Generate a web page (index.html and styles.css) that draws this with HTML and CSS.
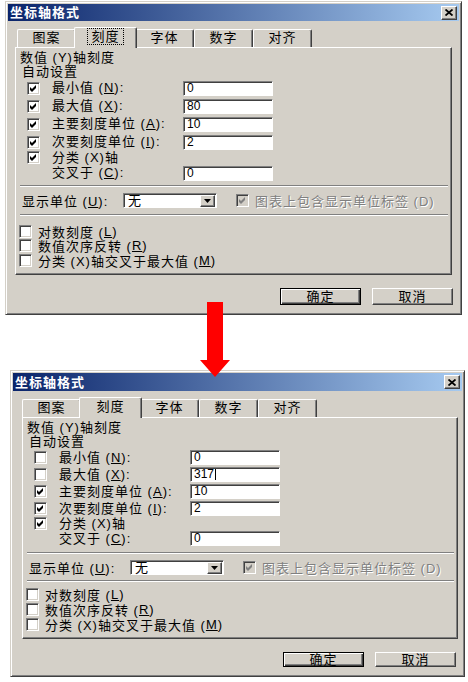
FILE: index.html
```html
<!DOCTYPE html>
<html lang="zh-CN">
<head>
  <meta charset="UTF-8">
  <title>坐标轴格式</title>
  <link rel="stylesheet" href="styles.css">
</head>
<body>
<div class="page">

  <!-- 修改前 -->
  <div class="dialog dialog-before">
    <div class="titlebar">
      <span class="title">坐标轴格式</span>
      <span class="close"><svg width="8" height="7" viewBox="0 0 8 7"><path d="M0.5 0.5L7.5 6.5M7.5 0.5L0.5 6.5" stroke="#000" stroke-width="1.8"/></svg></span>
    </div>
    <div class="tabs">
      <div class="tab">图案</div>
      <div class="tab active"><span class="focus">刻度</span></div>
      <div class="tab">字体</div>
      <div class="tab">数字</div>
      <div class="tab">对齐</div>
    </div>
    <div class="panel">
      <div class="caption">数值 (Y)轴刻度</div>
      <div class="caption sub">自动设置</div>
      <div class="scale">
        <div class="row">
          <span class="box"><svg class="tick" viewBox="0 0 7 7"><polygon points="0,2 2,4 6,0 6,3 2,7 0,5"/></svg></span>
          <span class="label">最小值 (<u>N</u>):</span>
          <span class="field">0</span>
        </div>
        <div class="row">
          <span class="box"><svg class="tick" viewBox="0 0 7 7"><polygon points="0,2 2,4 6,0 6,3 2,7 0,5"/></svg></span>
          <span class="label">最大值 (<u>X</u>):</span>
          <span class="field">80</span>
        </div>
        <div class="row">
          <span class="box"><svg class="tick" viewBox="0 0 7 7"><polygon points="0,2 2,4 6,0 6,3 2,7 0,5"/></svg></span>
          <span class="label">主要刻度单位 (<u>A</u>):</span>
          <span class="field">10</span>
        </div>
        <div class="row">
          <span class="box"><svg class="tick" viewBox="0 0 7 7"><polygon points="0,2 2,4 6,0 6,3 2,7 0,5"/></svg></span>
          <span class="label">次要刻度单位 (<u>I</u>):</span>
          <span class="field">2</span>
        </div>
        <div class="row short">
          <span class="box"><svg class="tick" viewBox="0 0 7 7"><polygon points="0,2 2,4 6,0 6,3 2,7 0,5"/></svg></span>
          <span class="label">分类 (X)轴</span>
        </div>
        <div class="row">
          <span class="box-space"></span>
          <span class="label">交叉于 (<u>C</u>):</span>
          <span class="field">0</span>
        </div>
      </div>
      <div class="etch etch-top"></div>
      <div class="unit-row">
        <span class="unit-label">显示单位 (<u>U</u>):</span>
        <span class="select">
          <span class="select-value">无</span>
          <span class="drop"><svg width="7" height="4" viewBox="0 0 7 4"><polygon points="0,0 7,0 3.5,4"/></svg></span>
        </span>
        <span class="box disabled"><svg class="tick" viewBox="0 0 7 7"><polygon points="0,2 2,4 6,0 6,3 2,7 0,5"/></svg></span>
        <span class="label-disabled">图表上包含显示单位标签 (D)</span>
      </div>
      <div class="etch etch-bottom"></div>
      <div class="options">
        <div class="option"><span class="box"></span>对数刻度 (<u>L</u>)</div>
        <div class="option"><span class="box"></span>数值次序反转 (<u>R</u>)</div>
        <div class="option"><span class="box"></span>分类 (X)轴交叉于最大值 (<u>M</u>)</div>
      </div>
    </div>
    <div class="actions">
      <div class="btn default">确定</div>
      <div class="btn">取消</div>
    </div>
  </div>

  <svg class="arrow" width="32" height="76" viewBox="0 0 32 76"><polygon points="8,0 24,0 24,58 31,58 16,75 1,58 8,58"/></svg>

  <!-- 修改后 -->
  <div class="dialog dialog-after">
    <div class="titlebar">
      <span class="title">坐标轴格式</span>
      <span class="close"><svg width="8" height="7" viewBox="0 0 8 7"><path d="M0.5 0.5L7.5 6.5M7.5 0.5L0.5 6.5" stroke="#000" stroke-width="1.8"/></svg></span>
    </div>
    <div class="tabs">
      <div class="tab">图案</div>
      <div class="tab active">刻度</div>
      <div class="tab">字体</div>
      <div class="tab">数字</div>
      <div class="tab">对齐</div>
    </div>
    <div class="panel">
      <div class="caption">数值 (Y)轴刻度</div>
      <div class="caption sub">自动设置</div>
      <div class="scale">
        <div class="row">
          <span class="box"></span>
          <span class="label">最小值 (<u>N</u>):</span>
          <span class="field">0</span>
        </div>
        <div class="row">
          <span class="box"></span>
          <span class="label">最大值 (<u>X</u>):</span>
          <span class="field">317<span class="caret"></span></span>
        </div>
        <div class="row">
          <span class="box"><svg class="tick" viewBox="0 0 7 7"><polygon points="0,2 2,4 6,0 6,3 2,7 0,5"/></svg></span>
          <span class="label">主要刻度单位 (<u>A</u>):</span>
          <span class="field">10</span>
        </div>
        <div class="row">
          <span class="box"><svg class="tick" viewBox="0 0 7 7"><polygon points="0,2 2,4 6,0 6,3 2,7 0,5"/></svg></span>
          <span class="label">次要刻度单位 (<u>I</u>):</span>
          <span class="field">2</span>
        </div>
        <div class="row short">
          <span class="box"><svg class="tick" viewBox="0 0 7 7"><polygon points="0,2 2,4 6,0 6,3 2,7 0,5"/></svg></span>
          <span class="label">分类 (X)轴</span>
        </div>
        <div class="row">
          <span class="box-space"></span>
          <span class="label">交叉于 (<u>C</u>):</span>
          <span class="field">0</span>
        </div>
      </div>
      <div class="etch etch-top"></div>
      <div class="unit-row">
        <span class="unit-label">显示单位 (<u>U</u>):</span>
        <span class="select">
          <span class="select-value">无</span>
          <span class="drop"><svg width="7" height="4" viewBox="0 0 7 4"><polygon points="0,0 7,0 3.5,4"/></svg></span>
        </span>
        <span class="box disabled"><svg class="tick" viewBox="0 0 7 7"><polygon points="0,2 2,4 6,0 6,3 2,7 0,5"/></svg></span>
        <span class="label-disabled">图表上包含显示单位标签 (D)</span>
      </div>
      <div class="etch etch-bottom"></div>
      <div class="options">
        <div class="option"><span class="box"></span>对数刻度 (<u>L</u>)</div>
        <div class="option"><span class="box"></span>数值次序反转 (<u>R</u>)</div>
        <div class="option"><span class="box"></span>分类 (X)轴交叉于最大值 (<u>M</u>)</div>
      </div>
    </div>
    <div class="actions">
      <div class="btn default">确定</div>
      <div class="btn">取消</div>
    </div>
  </div>

</div>
</body>
</html>
```

FILE: styles.css
```css
* {
  box-sizing: border-box;
}

body {
  margin: 0;
  background: #fff;
  font-family: "Liberation Sans", "Noto Sans CJK SC", sans-serif;
  font-size: 13px;
  letter-spacing: 1px;
  color: #000;
}

.page {
  position: relative;
  width: 468px;
  height: 682px;
  padding-top: 1px;
  display: flex;
  flex-direction: column;
  align-items: flex-start;
}

/* 窗口 */
.dialog {
  background: #d4d0c8;
  border: 1px solid;
  border-color: #d4d0c8 #404040 #404040 #d4d0c8;
  box-shadow: inset 1px 1px #fff, inset -1px -1px #808080;
  padding: 2px 2px 9px;
}

.dialog-before {
  width: 457px;
  margin-left: 5px;
}

.dialog-after {
  width: 455px;
  margin-left: 10px;
  margin-top: 55px;
}

.titlebar {
  height: 17px;
  display: flex;
  align-items: center;
  justify-content: space-between;
  padding: 0 2px 0 2px;
  background: linear-gradient(to right, #0a246a, #a6caf0);
  color: #fff;
}

.dialog-after .titlebar {
  height: 18px;
}

.title {
  font-weight: bold;
  line-height: 17px;
}

.close {
  width: 16px;
  height: 14px;
  background: #d4d0c8;
  border: 1px solid;
  border-color: #fff #404040 #404040 #fff;
  box-shadow: inset -1px -1px #808080;
  display: flex;
  align-items: center;
  justify-content: center;
}

/* 选项卡 */
.tabs {
  display: flex;
  align-items: flex-end;
  height: 20px;
  margin: 6px 0 0 9px;
}

.dialog-after .tabs {
  height: 19px;
  margin-top: 7px;
}

.tab {
  width: 59px;
  height: 18px;
  border: 1px solid;
  border-color: #fff #404040 transparent #fff;
  border-bottom: none;
  border-radius: 2px 2px 0 0;
  box-shadow: inset -1px 0 #808080;
  text-align: center;
  line-height: 16px;
}

.tab.active {
  position: relative;
  z-index: 1;
  width: 63px;
  height: 21px;
  margin: 0 -2px -1px;
  background: #d4d0c8;
  line-height: 18px;
}

.focus {
  outline: 1px dotted #000;
  outline-offset: 0;
  padding: 0 3px;
}

.panel {
  margin: 0 7px;
  border: 1px solid;
  border-color: #fff #404040 #404040 #fff;
  box-shadow: inset -1px -1px #808080;
  padding: 3px 0 6.5px;
}

.dialog-after .panel {
  margin: 0 4px 0 9px;
  padding-bottom: 6px;
}

.caption {
  height: 14px;
  line-height: 14px;
  padding-left: 4px;
}

.caption.sub {
  padding-left: 6px;
}

.row {
  display: flex;
  align-items: center;
  height: 18px;
  padding-left: 11px;
}

.row.short {
  height: 13px;
}

.dialog-after .row {
  height: 17px;
}

.dialog-after .row.short {
  height: 13px;
}

.box {
  flex: none;
  width: 13px;
  height: 13px;
  background: #fff;
  border: 1px solid;
  border-color: #808080 #fff #fff #808080;
  box-shadow: inset 1px 1px #404040, inset -1px -1px #d4d0c8;
  display: inline-flex;
  align-items: center;
  justify-content: center;
}

.box-space {
  flex: none;
  width: 13px;
}

.tick {
  width: 7px;
  height: 7px;
  fill: #000;
}

.box.disabled {
  background: #d4d0c8;
}

.box.disabled .tick {
  fill: #808080;
}

.label {
  width: 131px;
  margin-left: 12px;
  line-height: 14px;
  white-space: nowrap;
}

.field {
  width: 90px;
  height: 15px;
  background: #fff;
  border: 1px solid;
  border-color: #808080 #fff #fff #808080;
  box-shadow: inset 1px 1px #404040;
  padding: 0 3px;
  font-size: 12px;
  letter-spacing: 0;
  line-height: 13px;
  display: flex;
  align-items: center;
}

.caret {
  width: 1px;
  height: 11px;
  margin-left: 1px;
  background: #000;
}

/* 分隔线 */
.etch {
  height: 2px;
  margin: 3px 3px 4px 4px;
  border-top: 1px solid #808080;
  border-bottom: 1px solid #fff;
}

.etch-bottom {
  margin: 5px 3px 8px 4px;
}

.dialog-after .etch-top {
  margin: 5px 3px 5px 4px;
}

.dialog-after .etch-bottom {
  margin: 4px 3px 5px 4px;
}

.unit-row {
  display: flex;
  align-items: center;
  height: 18px;
  padding-left: 6px;
}

.dialog-after .unit-row {
  height: 17px;
}

.unit-label {
  width: 101px;
  white-space: nowrap;
}

.select {
  width: 94px;
  height: 15px;
  background: #fff;
  border: 1px solid;
  border-color: #808080 #fff #fff #808080;
  box-shadow: inset 1px 1px #404040;
  display: flex;
  padding: 1px 1px 0 1px;
}

.select-value {
  flex: 1;
  padding-left: 3px;
  line-height: 12px;
}

.drop {
  width: 15px;
  height: 12px;
  background: #d4d0c8;
  border: 1px solid;
  border-color: #fff #404040 #404040 #fff;
  box-shadow: inset -1px -1px #808080;
  display: flex;
  align-items: center;
  justify-content: center;
}

.unit-row .box {
  margin-left: 19px;
}

.label-disabled {
  margin-left: 6px;
  color: #808080;
  text-shadow: 1px 1px #fff;
  white-space: nowrap;
}

.options {
  padding-left: 3px;
}

.option {
  display: flex;
  align-items: center;
  height: 14.5px;
  white-space: nowrap;
}

.dialog-after .option {
  height: 15px;
}

.option .box {
  margin-right: 6px;
}

/* 按钮 */
.actions {
  display: flex;
  justify-content: flex-end;
  gap: 11px;
  margin: 13px 6px 0 0;
}

.btn {
  width: 81px;
  height: 17px;
  background: #d4d0c8;
  border: 1px solid;
  border-color: #fff #404040 #404040 #fff;
  box-shadow: inset -1px -1px #808080;
  text-align: center;
  line-height: 15px;
}

.btn.default {
  border-color: #000;
  box-shadow: inset 1px 1px #fff, inset -1px -1px #404040, inset -2px -2px #808080;
}

.dialog-after .btn {
  height: 15px;
  line-height: 13px;
}

.arrow {
  position: absolute;
  left: 199px;
  top: 302px;
  z-index: 2;
  fill: #f00;
}
```
